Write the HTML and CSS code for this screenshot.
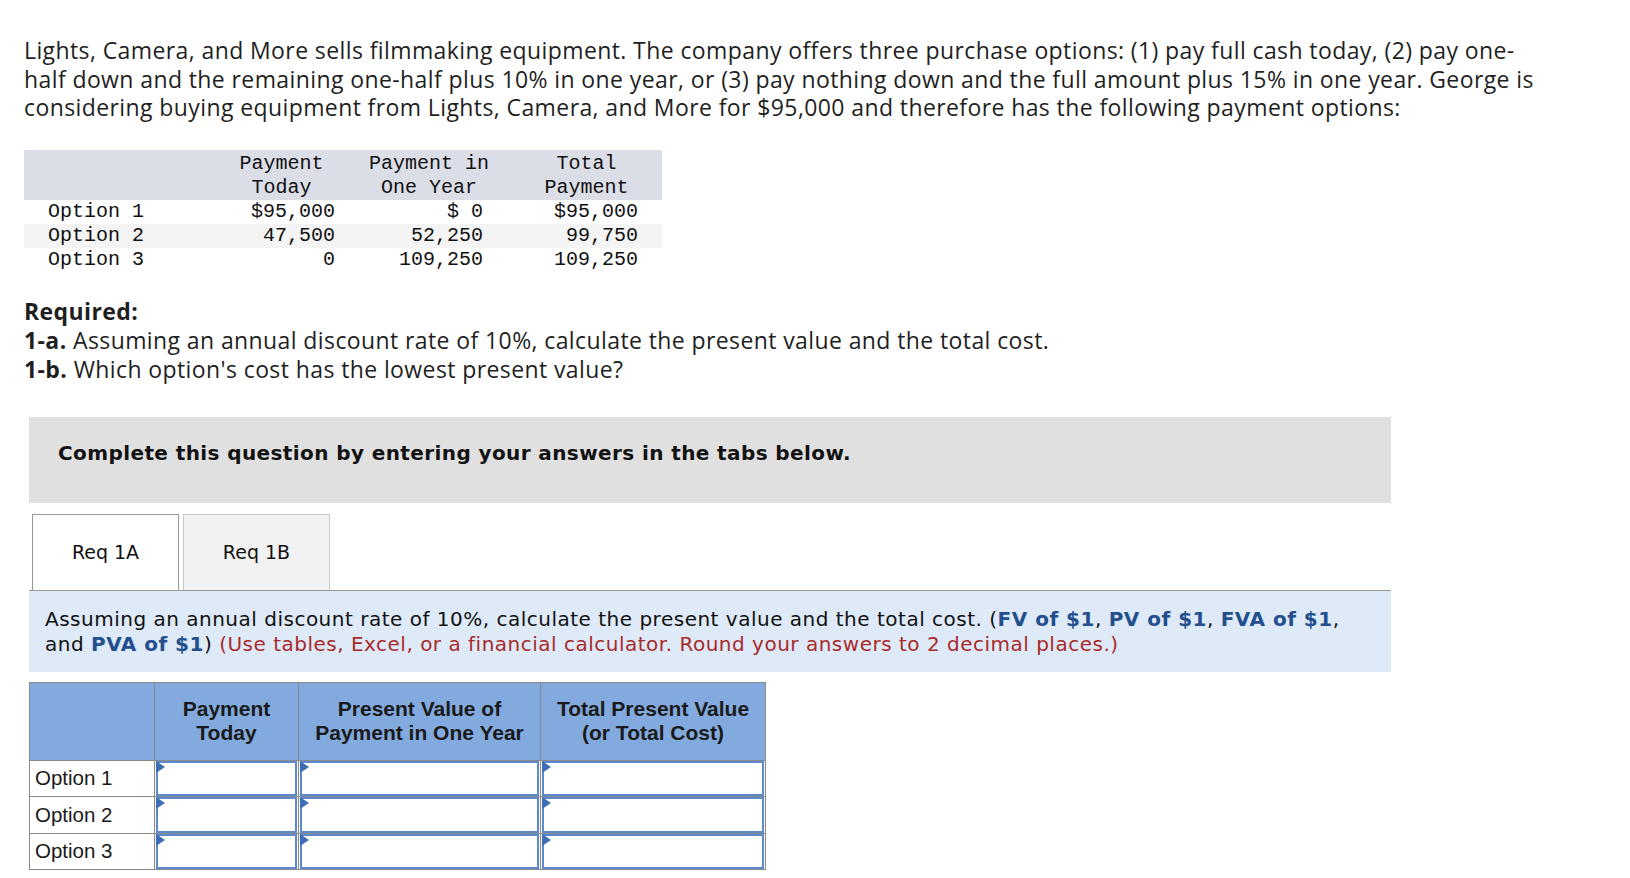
FILE: index.html
```html
<!DOCTYPE html>
<html>
<head>
<meta charset="utf-8">
<link rel="stylesheet" href="styles.css">
</head>
<body>
<div class="page">
  <p class="intro">Lights, Camera, and More sells filmmaking equipment. The company offers three purchase options: (1) pay full cash today, (2) pay one-half down and the remaining one-half plus 10% in one year, or (3) pay nothing down and the full amount plus 15% in one year. George is considering buying equipment from Lights, Camera, and More for $95,000 and therefore has the following payment options:</p>

  <table class="mono">
    <tr class="mhead">
      <th class="c1"></th>
      <th class="c2 h2">Payment<br>Today</th>
      <th class="c3">Payment in<br>One Year</th>
      <th class="c4">Total<br>Payment</th>
    </tr>
    <tr>
      <td class="c1">Option 1</td>
      <td class="c2">$95,000</td>
      <td class="c3">$ 0</td>
      <td class="c4">$95,000</td>
    </tr>
    <tr class="alt">
      <td class="c1">Option 2</td>
      <td class="c2">47,500</td>
      <td class="c3">52,250</td>
      <td class="c4">99,750</td>
    </tr>
    <tr>
      <td class="c1">Option 3</td>
      <td class="c2">0</td>
      <td class="c3">109,250</td>
      <td class="c4">109,250</td>
    </tr>
  </table>

  <div class="required">
    <div class="req-title">Required:</div>
    <div><b>1-a.</b> Assuming an annual discount rate of 10%, calculate the present value and the total cost.</div>
    <div><b>1-b.</b> Which option's cost has the lowest present value?</div>
  </div>

  <div class="notice">Complete this question by entering your answers in the tabs below.</div>

  <div class="tabs">
    <div class="tab active">Req 1A</div>
    <div class="tab">Req 1B</div>
  </div>

  <div class="info">Assuming an annual discount rate of 10%, calculate the present value and the total cost. (<b class="lnk">FV of $1</b>, <b class="lnk">PV of $1</b>, <b class="lnk">FVA of $1</b>,<br>and <b class="lnk">PVA of $1</b>) <span class="red">(Use tables, Excel, or a financial calculator. Round your answers to 2 decimal places.)</span></div>

  <table class="answer">
    <tr class="ahead">
      <th class="a1"></th>
      <th class="a2">Payment<br>Today</th>
      <th class="a3">Present Value of<br>Payment in One Year</th>
      <th class="a4">Total Present Value<br>(or Total Cost)</th>
    </tr>
    <tr>
      <td class="lbl">Option 1</td>
      <td class="inp"><div class="box"><span class="flag"></span></div></td>
      <td class="inp"><div class="box"><span class="flag"></span></div></td>
      <td class="inp"><div class="box"><span class="flag"></span></div></td>
    </tr>
    <tr>
      <td class="lbl">Option 2</td>
      <td class="inp"><div class="box"><span class="flag"></span></div></td>
      <td class="inp"><div class="box"><span class="flag"></span></div></td>
      <td class="inp"><div class="box"><span class="flag"></span></div></td>
    </tr>
    <tr>
      <td class="lbl">Option 3</td>
      <td class="inp"><div class="box"><span class="flag"></span></div></td>
      <td class="inp"><div class="box"><span class="flag"></span></div></td>
      <td class="inp"><div class="box"><span class="flag"></span></div></td>
    </tr>
  </table>
</div>
</body>
</html>
```

FILE: styles.css
```css
html, body {
  margin: 0;
  padding: 0;
  background: #fff;
}
.page {
  padding: 36px 0 0 24px;
  color: #1f1f1f;
}
.intro {
  margin: 0;
  width: 1515px;
  font-family: "Open Sans", "Liberation Sans", sans-serif;
  font-size: 23px;
  letter-spacing: 0.4px;
  line-height: 28.5px;
}
.mono {
  margin-top: 28px;
  border-collapse: collapse;
  font-family: "Liberation Mono", monospace;
  font-size: 20px;
  line-height: 24px;
  color: #111;
}
.mono th, .mono td {
  padding: 0;
  font-weight: normal;
  white-space: nowrap;
}
.mono .mhead th {
  background: #dbdee7;
  text-align: center;
  padding-top: 2px;
}
.mono .c1 { width: 180px; padding-left: 24px; text-align: left; }
.mono .c2 { width: 107px; padding-right: 24px; text-align: right; }
.mono .c3 { width: 124px; padding-right: 24px; text-align: right; }
.mono .c4 { width: 131px; padding-right: 24px; text-align: right; }
.mono .mhead .c3 { padding-right: 8px; padding-left: 0; }
.mono .mhead .c4 { padding-right: 0; padding-left: 4px; }
.mono tr.alt td { background: #f4f4f4; }

.required {
  margin-top: 25px;
  font-family: "Open Sans", "Liberation Sans", sans-serif;
  font-size: 23px;
  letter-spacing: 0.4px;
  line-height: 29px;
}
.req-title { font-weight: bold; }
.required b { font-weight: bold; }

.notice {
  margin: 33px 0 0 5px;
  width: 1333px;
  height: 62px;
  padding: 24px 0 0 29px;
  background: #e0e0e0;
  font-family: "DejaVu Sans", Verdana, sans-serif;
  font-weight: bold;
  font-size: 20px;
  letter-spacing: 0.4px;
  line-height: 24px;
  color: #111;
}

.tabs {
  display: flex;
  gap: 4px;
  margin: 11px 0 0 8px;
}
.tab {
  width: 145px;
  height: 75px;
  border: 1px solid #c8c8c8;
  border-bottom: none;
  background: #f2f2f2;
  display: flex;
  align-items: center;
  justify-content: center;
  font-family: "DejaVu Sans", Verdana, sans-serif;
  font-size: 19px;
  color: #111;
}
.tab.active {
  background: #fff;
  border-color: #999;
}

.info {
  margin-left: 5px;
  width: 1330px;
  border-top: 1px solid #999;
  background: #deeaf7;
  padding: 16px 16px 15px 16px;
  font-family: "DejaVu Sans", Verdana, sans-serif;
  font-size: 20px;
  letter-spacing: 0.5px;
  line-height: 25px;
  color: #111;
}
.lnk { color: #244f8e; }
.red { color: #a92a2a; }

.answer {
  margin: 10px 0 0 5px;
  border-collapse: collapse;
  font-family: "Liberation Sans", Arial, sans-serif;
  color: #1a1a1a;
}
.answer th, .answer td {
  border: 1px solid #8a8a8a;
  padding: 0;
}
.ahead th {
  background: #82aadf;
  height: 77px;
  font-size: 21px;
  line-height: 24px;
  font-weight: bold;
  text-align: center;
  vertical-align: middle;
}
.a1 { width: 124px; }
.a2 { width: 143px; }
.a3 { width: 241px; }
.a4 { width: 224px; }
.lbl {
  height: 35.5px;
  font-size: 20.5px;
  padding-left: 5px !important;
  text-align: left;
}
.inp {
  height: 35.5px;
  vertical-align: top;
}
.box {
  position: relative;
  height: 31.5px;
  margin: 0 1px 0 1px;
  border: 2px solid #5c89cc;
  background: #fff;
}
.flag {
  position: absolute;
  left: -2px;
  top: -2px;
  width: 0;
  height: 0;
  border-top: 6px solid transparent;
  border-bottom: 6px solid transparent;
  border-left: 9px solid #3d6db4;
}
```
